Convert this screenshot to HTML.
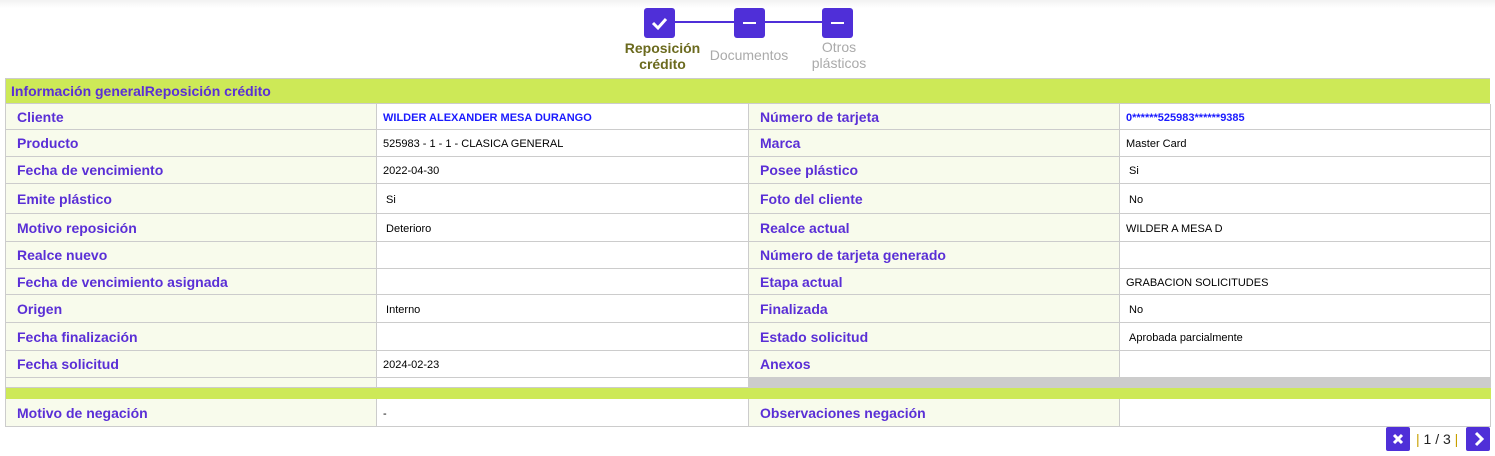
<!DOCTYPE html><html><head><meta charset="utf-8"><style>
body{margin:0;width:1495px;height:455px;background:#fff;font-family:"Liberation Sans",Arial,sans-serif;position:relative;overflow:hidden}
.a{position:absolute;box-sizing:border-box}
.l{background:#f8fbec;border-right:1px solid #ccc;border-bottom:1px solid #ccc;color:#5a2fd6;font-weight:bold;font-size:14px;padding-left:11px;display:flex;align-items:center}
.v{background:#fff;border-right:1px solid #ccc;border-bottom:1px solid #ccc;color:#000;font-size:11px;padding-left:6px;padding-top:2px;display:flex;align-items:center}
.b{color:#1a1aff;font-weight:bold}
.st{position:absolute;top:8px;width:31px;height:30px;background:#4f2fd8;border-radius:3px}
.st i{position:absolute;left:9px;top:14px;width:13px;height:2px;background:#fff}
</style></head><body>
<div class="a" style="left:0;top:0;width:1495px;height:8px;background:linear-gradient(#f2f2f2,#fff)"></div>
<div class="a" style="left:660px;top:21px;width:180px;height:2px;background:#4f2fd8"></div>
<div class="st" style="left:644px"><svg width="31" height="30"><path d="M9 15l5 5 8-9" stroke="#fff" stroke-width="3" fill="none"/></svg></div>
<div class="st" style="left:734px"><i></i></div>
<div class="st" style="left:822px"><i></i></div>
<div class="a" style="left:610px;top:40px;width:105px;text-align:center;font-size:14px;font-weight:bold;color:#6b6a1e;line-height:16px">Reposición<br>crédito</div>
<div class="a" style="left:700px;top:47px;width:98px;text-align:center;font-size:14px;color:#aaa">Documentos</div>
<div class="a" style="left:790px;top:39px;width:98px;text-align:center;font-size:14px;color:#aaa;line-height:16px">Otros<br>plásticos</div>
<div class="a" style="left:5px;top:78px;width:1485px;height:349px;border:1px solid #ccc;border-right:none;border-bottom:none"></div>
<div class="a" style="left:6px;top:79px;width:1484px;height:25px;background:#cde957;border-bottom:1px solid #ccc;color:#5a2fd6;font-weight:bold;font-size:14px;padding-left:5px;display:flex;align-items:center">Información generalReposición crédito</div>

<div class="a l" style="left:6px;top:104px;width:371px;height:26px">Cliente</div><div class="a v" style="left:377px;top:104px;width:372px;height:26px"><span class="b">WILDER ALEXANDER MESA DURANGO</span></div><div class="a l" style="left:749px;top:104px;width:371px;height:26px">Número de tarjeta</div><div class="a v" style="left:1120px;top:104px;width:371px;height:26px"><span class="b">0******525983******9385</span></div>
<div class="a l" style="left:6px;top:130px;width:371px;height:27px">Producto</div><div class="a v" style="left:377px;top:130px;width:372px;height:27px">525983 - 1 - 1 - CLASICA GENERAL</div><div class="a l" style="left:749px;top:130px;width:371px;height:27px">Marca</div><div class="a v" style="left:1120px;top:130px;width:371px;height:27px">Master Card</div>
<div class="a l" style="left:6px;top:157px;width:371px;height:27px">Fecha de vencimiento</div><div class="a v" style="left:377px;top:157px;width:372px;height:27px">2022-04-30</div><div class="a l" style="left:749px;top:157px;width:371px;height:27px">Posee plástico</div><div class="a v" style="left:1120px;top:157px;width:371px;height:27px">&nbsp;Si</div>
<div class="a l" style="left:6px;top:184px;width:371px;height:30px">Emite plástico</div><div class="a v" style="left:377px;top:184px;width:372px;height:30px">&nbsp;Si</div><div class="a l" style="left:749px;top:184px;width:371px;height:30px">Foto del cliente</div><div class="a v" style="left:1120px;top:184px;width:371px;height:30px">&nbsp;No</div>
<div class="a l" style="left:6px;top:214px;width:371px;height:28px">Motivo reposición</div><div class="a v" style="left:377px;top:214px;width:372px;height:28px">&nbsp;Deterioro</div><div class="a l" style="left:749px;top:214px;width:371px;height:28px">Realce actual</div><div class="a v" style="left:1120px;top:214px;width:371px;height:28px">WILDER A MESA D</div>
<div class="a l" style="left:6px;top:242px;width:371px;height:27px">Realce nuevo</div><div class="a v" style="left:377px;top:242px;width:372px;height:27px"></div><div class="a l" style="left:749px;top:242px;width:371px;height:27px">Número de tarjeta generado</div><div class="a v" style="left:1120px;top:242px;width:371px;height:27px"></div>
<div class="a l" style="left:6px;top:269px;width:371px;height:26px">Fecha de vencimiento asignada</div><div class="a v" style="left:377px;top:269px;width:372px;height:26px"></div><div class="a l" style="left:749px;top:269px;width:371px;height:26px">Etapa actual</div><div class="a v" style="left:1120px;top:269px;width:371px;height:26px">GRABACION SOLICITUDES</div>
<div class="a l" style="left:6px;top:295px;width:371px;height:28px">Origen</div><div class="a v" style="left:377px;top:295px;width:372px;height:28px">&nbsp;Interno</div><div class="a l" style="left:749px;top:295px;width:371px;height:28px">Finalizada</div><div class="a v" style="left:1120px;top:295px;width:371px;height:28px">&nbsp;No</div>
<div class="a l" style="left:6px;top:323px;width:371px;height:28px">Fecha finalización</div><div class="a v" style="left:377px;top:323px;width:372px;height:28px"></div><div class="a l" style="left:749px;top:323px;width:371px;height:28px">Estado solicitud</div><div class="a v" style="left:1120px;top:323px;width:371px;height:28px">&nbsp;Aprobada parcialmente</div>
<div class="a l" style="left:6px;top:351px;width:371px;height:27px">Fecha solicitud</div><div class="a v" style="left:377px;top:351px;width:372px;height:27px">2024-02-23</div><div class="a l" style="left:749px;top:351px;width:371px;height:27px">Anexos</div><div class="a v" style="left:1120px;top:351px;width:371px;height:27px"></div>
<div class="a l" style="left:6px;top:378px;width:371px;height:10px"></div><div class="a v" style="left:377px;top:378px;width:372px;height:10px"></div><div class="a" style="left:749px;top:378px;width:742px;height:10px;background:#ccc"></div>
<div class="a" style="left:6px;top:388px;width:1485px;height:11px;background:#cde957"></div>
<div class="a l" style="left:6px;top:399px;width:371px;height:28px">Motivo de negación</div><div class="a v" style="left:377px;top:399px;width:372px;height:28px">-</div><div class="a l" style="left:749px;top:399px;width:371px;height:28px">Observaciones negación</div><div class="a v" style="left:1120px;top:399px;width:371px;height:28px"></div>

<div class="a" style="left:1386px;top:427px;width:24px;height:24px;background:#4f2fd8;border-radius:2px"><svg width="24" height="24"><path d="M8 8l8 8M16 8l-8 8" stroke="#fff" stroke-width="3"/></svg></div>
<div class="a" style="left:1416px;top:431px;font-size:14px;color:#222"><span style="color:#c8a000">|</span> 1 / 3 <span style="color:#c8a000">|</span></div>
<div class="a" style="left:1466px;top:427px;width:24px;height:24px;background:#4f2fd8;border-radius:2px"><svg width="24" height="24"><path d="M10 6l6 6-6 6" stroke="#fff" stroke-width="3" fill="none"/></svg></div>
</body></html>
